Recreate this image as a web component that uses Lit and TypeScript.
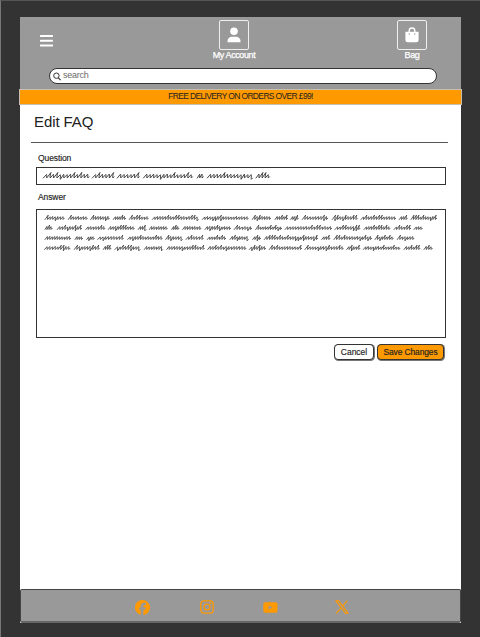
import { LitElement, html, css, svg } from "lit";
import { customElement, property } from "lit/decorators.js";

type Word = [number, number];

const QUESTION: Word[][] = [
  [[43.3, 89], [92.3, 114], [117.3, 139.3], [143.5, 192.5], [197.3, 203.3], [207.3, 252.5], [256, 269.5]],
];

const ANSWER: Word[][] = [
  [[45, 64.3], [68.3, 87.3], [90.7, 109.3], [113.3, 125.7], [129.3, 148.3], [152.3, 198.3], [202.3, 248.3], [252.3, 270.7], [275, 287.7], [290.7, 298.3], [302.3, 327.7], [332.3, 357.3], [361, 395.7], [399.3, 407.3], [411, 436.7]],
  [[45, 52.3], [57.3, 81.7], [85.7, 105], [108.3, 134.3], [138.3, 146], [149.3, 167.3], [171.7, 179], [182.7, 201], [205, 230.7], [234.3, 251.7], [255.7, 281.7], [285, 331.7], [335, 360], [364, 390], [394, 410.7], [414, 422.3]],
  [[45, 70.7], [75, 82.7], [86.7, 94.3], [97.7, 123.3], [127.7, 162.3], [165.7, 182.3], [186, 203.3], [207.3, 225.7], [230, 248.3], [252.7, 260.7], [264.3, 317.7], [321.7, 330], [334, 371.7], [375, 393.3], [397.3, 414]],
  [[44.5, 70], [74.3, 99.3], [103.3, 111], [115, 140], [144.3, 162.7], [166.7, 204.3], [207.7, 246], [249.3, 265.7], [269.3, 301.7], [305, 343.3], [346.7, 360], [363.3, 400], [404, 420], [424, 432.3]],
];

/** Lines of handwriting-like scribble standing in for body copy. */
@customElement("scribble-text")
export class ScribbleText extends LitElement {
  @property({ attribute: false }) lines: Word[][] = [];
  @property({ type: Number }) rise = 4;
  @property({ type: Number }) step = 3;
  @property({ type: Number }) weight = 0.9;
  @property({ type: Number }) baseline = 10;

  static styles = css`
    :host { display: block; }
    svg { display: block; fill: none; stroke: #333; stroke-linecap: round; stroke-linejoin: round; }
  `;

  private word([from, to]: Word, row: number) {
    const left = from - 37;
    const right = to - 37;
    const base = row * 10 + this.baseline;
    const count = Math.max(2, Math.round((right - left) / this.step));
    const w = (right - left - 1.2) / count;
    let seed = Math.round(from * 1313 + row * 7177 + 911) % 65536;
    const next = () => ((seed = (seed * 1103 + 12345) % 65536) / 65536);
    let d = `M${left.toFixed(2)} ${base}`;
    for (let i = 0; i < count; i++) {
      const x = left + i * w;
      const r = next();
      const top = base - this.rise * (r > 0.75 ? 1.45 : 0.85 + r * 0.25);
      const low = base + (next() > 0.9 ? 1.3 : 0);
      const lean = w * (r > 0.75 ? 1.25 : 0.95);
      d += `L${(x + lean).toFixed(2)} ${top.toFixed(2)}`;
      d += `Q${(x + w * 1.1).toFixed(2)} ${(top + 0.3).toFixed(2)} ${(x + w * 0.95).toFixed(2)} ${(low - 0.6).toFixed(2)}`;
      d += `L${(x + w).toFixed(2)} ${low}`;
    }
    d += `l1.2 -1.2`;
    return d;
  }

  render() {
    return html`<svg width="405" height=${this.lines.length * 10 + 6} stroke-width=${this.weight}>
      ${this.lines.map((line, row) => line.map((w) => svg`<path d=${this.word(w, row)} />`))}
    </svg>`;
  }
}

@customElement("app-root")
export class AppRoot extends LitElement {
  static styles = css`
    * { box-sizing: border-box; }
    :host {
      display: block; width: 480px; height: 637px; background: #333; overflow: hidden;
      border-left: 1px solid #777; border-top: 1px solid #555;
      font-family: "Liberation Sans", Arial, sans-serif; color: #222;
    }
    svg { display: block; }
    .screen { display: flex; flex-direction: column; width: 441px; height: 606px; margin: 16px 0 0 19px; background: #fff; }
    header { height: 73px; background: #999; color: #fff; flex: none; }
    .top { display: flex; height: 46px; align-items: flex-start; }
    .menu { margin: 18px 0 0 20px; }
    .action { display: flex; flex-direction: column; align-items: center; font-size: 9px; line-height: 11px; width: 46px; padding-top: 3px; white-space: nowrap; -webkit-text-stroke: 0.25px #fff; }
    .account { margin-left: 158px; letter-spacing: -0.4px; }
    .bag { margin-left: 132px; letter-spacing: -0.4px; }
    .box { width: 30px; height: 30px; border: 1px solid #eee; border-radius: 2px; display: flex; align-items: center; justify-content: center; flex: none; }
    .search { display: flex; align-items: center; width: 388px; height: 16px; margin: 5px 0 0 29px; border: 1px solid #333; border-radius: 8px; background: #fff; padding-left: 3px; gap: 2px; font-size: 9px; line-height: 12px; color: #6b6b6b; }
    .search span { padding-bottom: 2px; letter-spacing: -0.25px; }
    .banner { height: 16px; flex: none; margin: -1px -1px 0; background: #ff9900; border: 1px solid #c9bfae; font-size: 8.5px; line-height: 13px; text-align: center; white-space: nowrap; letter-spacing: -0.65px; color: #222; }
    main { flex: 1; padding: 8px 0 0 16px; }
    h1 { margin: 0 0 0 -2px; font-size: 15px; line-height: 17px; font-weight: 400; letter-spacing: -0.1px; }
    .rule { width: 417px; height: 1px; margin: 12px 0 10px -5px; background: #555; }
    label { display: block; margin-left: 2px; font-size: 8.5px; line-height: 10px; letter-spacing: -0.1px; -webkit-text-stroke: 0.15px #222; }
    .field { width: 410px; border: 1px solid #333; }
    .question { height: 18px; margin: 4px 0 7px; }
    .answer { height: 129px; margin-top: 7px; padding-top: 1px; }
    .buttons { display: flex; justify-content: flex-end; gap: 3px; width: 408px; margin-top: 6px; }
    button { height: 16px; padding: 0; margin: 0; border: 1px solid #333; border-radius: 4px; box-shadow: 0.5px 0.5px 0 0.5px #777; background: #fff; color: #222; font: 8.5px/14px "Liberation Sans", Arial, sans-serif; -webkit-text-stroke: 0.15px #222; }
    .cancel { width: 40px; }
    .save { width: 67px; background: #ff9900; letter-spacing: -0.15px; }
    footer { display: flex; height: 34px; flex: none; background: #999; border: 1px solid #444; border-bottom: 2px solid #666; border-radius: 2px; align-items: center; padding: 3px 0 0 114px; color: #ff9900; }
    .ig { margin-left: 50px; }
    .yt { margin-left: 49px; }
    .x { margin-left: 57px; }
  `;

  render() {
    return html`
      <div class="screen">
        <header>
          <div class="top">
            <svg class="menu" width="13" height="12" fill="#fff"><rect width="13" height="2" rx=".6" /><rect y="4.7" width="13" height="2" rx=".6" /><rect y="9.5" width="13" height="2" rx=".6" /></svg>
            <div class="action account">
              <div class="box"><svg width="14" height="16" viewBox="0 0 14 16" fill="#fff"><circle cx="7" cy="4.2" r="3.8" /><path d="M.5 15.3v-1.2C.5 11.3 2.5 9.7 5 9.7h4c2.5 0 4.5 1.6 4.5 4.4v1.2z" /></svg></div>
              My Account
            </div>
            <div class="action bag">
              <div class="box"><svg width="14" height="16" viewBox="0 0 14 16"><path d="M4.2 7V3.8a2.8 2.8 0 0 1 5.6 0V7" fill="none" stroke="#fff" stroke-width="1.4" /><path d="M.4 4.8h13.2v8.1a2.4 2.4 0 0 1-2.4 2.4H2.8a2.4 2.4 0 0 1-2.4-2.4z" fill="#fff" /><circle cx="4.2" cy="7" r=".7" fill="#999" /><circle cx="9.8" cy="7" r=".7" fill="#999" /></svg></div>
              Bag
            </div>
          </div>
          <div class="search">
            <svg width="8" height="9" viewBox="0 0 8 9" fill="none" stroke="#333"><circle cx="3.4" cy="3.7" r="2.7" /><path d="M5.4 5.8 7.6 8.2" stroke-width="1.2" /></svg>
            <span>search</span>
          </div>
        </header>
        <div class="banner">FREE DELIVERY ON ORDERS OVER £99!</div>
        <main>
          <h1>Edit FAQ</h1>
          <div class="rule"></div>
          <label>Question</label>
          <div class="field question"><scribble-text .lines=${QUESTION} .rise=${3.8} .step=${3.5} .weight=${0.9} .baseline=${10}></scribble-text></div>
          <label>Answer</label>
          <div class="field answer"><scribble-text .lines=${ANSWER} .rise=${3} .step=${2.7} .weight=${0.8} .baseline=${8.5}></scribble-text></div>
          <div class="buttons"><button class="cancel">Cancel</button><button class="save">Save Changes</button></div>
        </main>
        <footer>
          <svg width="15" height="15" viewBox="0 0 512 512" fill="currentColor"><path d="M512 256a256 256 0 1 0-318 248V334h-53v-78h53v-34c0-87 40-127 125-127 16 0 44 3 56 6v71c-6-1-17-1-30-1-42 0-58 16-58 57v28h83l-14 78h-69v176a256 256 0 0 0 225-254z" /></svg>
          <svg class="ig" width="14" height="14" viewBox="0 0 14 14" fill="none" stroke="currentColor" stroke-width="1.3"><rect x=".8" y=".8" width="12.4" height="12.4" rx="3.3" /><circle cx="7" cy="7" r="2.9" /><circle cx="10.7" cy="3.4" r=".8" fill="currentColor" stroke="none" /></svg>
          <svg class="yt" width="15" height="11" viewBox="0 0 15 11"><rect x=".3" y=".3" width="14.2" height="10.4" rx="2" fill="currentColor" /><path d="M5.6 3.4v4.2L9.4 5.5z" fill="#999" /></svg>
          <svg class="x" width="14" height="14" viewBox="0 0 14 14" fill="none" stroke="currentColor" stroke-width="1.1"><path d="M1 .9h2.7L13 13.1h-2.7zM12.4.6 7.8 5.8M6 8.2 1.2 13.4" /></svg>
        </footer>
      </div>
    `;
  }
}
